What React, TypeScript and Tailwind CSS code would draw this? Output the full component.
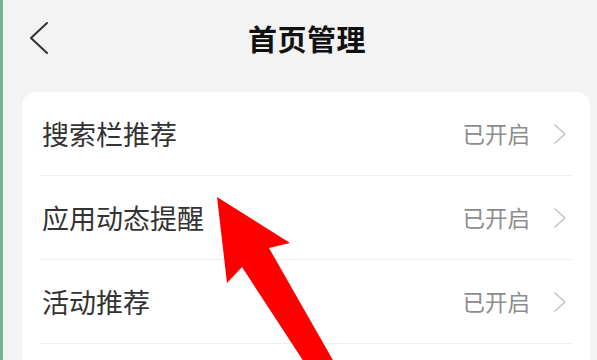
const rows = ["搜索栏推荐", "应用动态提醒", "活动推荐"];

function Chevron() {
  return (
    <svg width="14" height="20" viewBox="0 0 14 20" fill="none" className="shrink-0">
      <polyline points="2,1 12,10 2,19" stroke="#c4c4c4" strokeWidth="1.6" strokeLinecap="round" strokeLinejoin="round" />
    </svg>
  );
}

export default function App() {
  return (
    <div
      className="relative flex h-[360px] w-[597px] overflow-hidden bg-[#f3f3f3]"
      style={{ fontFamily: '"Noto Sans CJK SC", "Noto Sans", sans-serif' }}
    >
      <div className="w-[3px] shrink-0 bg-[#74b391]" />
      <div className="flex min-h-0 flex-1 flex-col">
        <header className="flex h-[76px] shrink-0 items-center pl-[26px]">
          <svg width="20" height="32" viewBox="0 0 20 32" fill="none" className="shrink-0">
            <polyline points="18,1 2,16 18,31" stroke="#333" strokeWidth="2" strokeLinecap="round" strokeLinejoin="round" />
          </svg>
          <h1 className="ml-[199px] text-[29px] font-bold leading-none tracking-[0.5px] text-[#111]">首页管理</h1>
        </header>
        <div className="ml-[19px] mr-[7px] mt-[16px] shrink-0 rounded-[14px] bg-white px-[18px]">
          {rows.map((label) => (
            <div key={label} className="flex h-[84px] items-center border-b border-[#efefef] pl-[2px] pr-[5px]">
              <span className="flex-1 text-[27px] leading-none text-[#333]">{label}</span>
              <span className="mr-[23px] text-[22.5px] leading-none text-[#8c8c8c]">已开启</span>
              <Chevron />
            </div>
          ))}
          <div className="h-[84px]" />
        </div>
      </div>
      <svg className="pointer-events-none absolute inset-0" width="597" height="360" viewBox="0 0 597 360">
        <polygon
          points="217,197 290,243 269,248 334,362 304,362 242,267 227,283"
          fill="#ff0000"
        />
      </svg>
    </div>
  );
}
